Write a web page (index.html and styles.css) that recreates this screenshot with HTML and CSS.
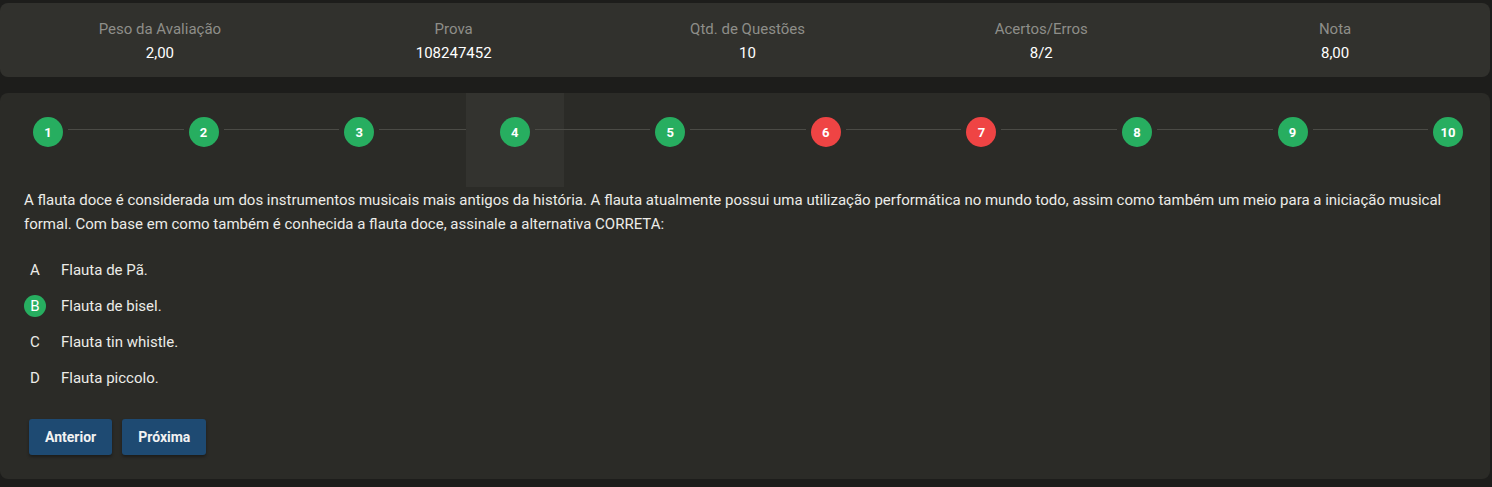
FILE: index.html
```
<!DOCTYPE html>
<html lang="pt-BR">
<head>
<meta charset="utf-8">
<title>Prova</title>
<link rel="stylesheet" href="styles.css">
</head>
<body>
<div class="page">
  <section class="card stats">
    <div class="stat"><div class="stat-label">Peso da Avaliação</div><div class="stat-value">2,00</div></div>
    <div class="stat"><div class="stat-label">Prova</div><div class="stat-value">108247452</div></div>
    <div class="stat"><div class="stat-label">Qtd. de Questões</div><div class="stat-value">10</div></div>
    <div class="stat"><div class="stat-label">Acertos/Erros</div><div class="stat-value">8/2</div></div>
    <div class="stat"><div class="stat-label">Nota</div><div class="stat-value">8,00</div></div>
  </section>

  <section class="card quiz">
    <div class="steps">
      <div class="step-wrap"><div class="step ok">1</div></div><div class="line"></div>
      <div class="step-wrap"><div class="step ok">2</div></div><div class="line"></div>
      <div class="step-wrap"><div class="step ok">3</div></div><div class="line"></div>
      <div class="step-wrap active"><div class="step ok">4</div></div><div class="line"></div>
      <div class="step-wrap"><div class="step ok">5</div></div><div class="line"></div>
      <div class="step-wrap"><div class="step bad">6</div></div><div class="line"></div>
      <div class="step-wrap"><div class="step bad">7</div></div><div class="line"></div>
      <div class="step-wrap"><div class="step ok">8</div></div><div class="line"></div>
      <div class="step-wrap"><div class="step ok">9</div></div><div class="line"></div>
      <div class="step-wrap"><div class="step ok">10</div></div>
    </div>

    <p class="question">A flauta doce é considerada um dos instrumentos musicais mais antigos da história. A flauta atualmente possui uma utilização performática no mundo todo, assim como também um meio para a iniciação musical formal. Com base em como também é conhecida a flauta doce, assinale a alternativa CORRETA:</p>

    <ul class="options">
      <li class="option"><span class="letter">A</span><span class="option-text">Flauta de Pã.</span></li>
      <li class="option correct"><span class="letter">B</span><span class="option-text">Flauta de bisel.</span></li>
      <li class="option"><span class="letter">C</span><span class="option-text">Flauta tin whistle.</span></li>
      <li class="option"><span class="letter">D</span><span class="option-text">Flauta piccolo.</span></li>
    </ul>

    <div class="actions">
      <button class="btn">Anterior</button>
      <button class="btn">Próxima</button>
    </div>
  </section>
</div>
</body>
</html>
```
FILE: styles.css
```
* { box-sizing: border-box; }
html, body {
  margin: 0;
  padding: 0;
  background: #1d1d1b;
  font-family: Roboto, "Liberation Sans", sans-serif;
  color: #ecece8;
}
.page {
  padding: 3px 2px 8px 0;
  display: flex;
  flex-direction: column;
  gap: 16px;
}
.card {
  border-radius: 8px;
}
.stats {
  background: #31312d;
  height: 74px;
  display: flex;
  align-items: center;
  padding: 2px 8px 0 13px;
}
.stat {
  flex: 1;
  text-align: center;
  font-size: 15px;
  line-height: 24px;
}
.stat-label { color: #8e8e89; }
.stat-value { color: #ffffff; }

.quiz {
  background: #2b2b27;
  padding-bottom: 24px;
}
.steps {
  display: flex;
  align-items: flex-start;
  padding: 0 27px 0 33px;
}
.step-wrap {
  flex: 0 0 auto;
  padding: 24px 0 40px;
}
.step-wrap.active {
  padding: 24px 34px 40px;
  margin: 0 -34px;
  background: #33332f;
}
.step {
  width: 30px;
  height: 30px;
  border-radius: 50%;
  color: #fff;
  font-weight: 700;
  font-size: 13px;
  display: flex;
  align-items: center;
  justify-content: center;
}
.step.ok { background: #27ae60; }
.step.bad { background: #ef4444; }
.line {
  flex: 1;
  height: 1px;
  margin: 36px 5px 0;
  background: #4b4b46;
}
.question {
  margin: 0;
  padding: 1px 24px 0;
  font-size: 15px;
  line-height: 24px;
  color: #ecece8;
}
.options {
  list-style: none;
  margin: 16px 0 0;
  padding: 0 24px;
}
.option {
  height: 36px;
  display: flex;
  align-items: center;
  gap: 15px;
  font-size: 15px;
}
.letter {
  width: 22px;
  height: 22px;
  border-radius: 50%;
  display: flex;
  align-items: center;
  justify-content: center;
}
.option.correct .letter { background: #27ae60; color: #fff; }
.actions {
  margin-top: 23px;
  padding-left: 29px;
  display: flex;
  gap: 10px;
}
.btn {
  height: 36px;
  padding: 0 16px;
  border: none;
  border-radius: 3px;
  background: #1e4a72;
  color: #f2f2f2;
  font-family: Roboto, "Liberation Sans", sans-serif;
  font-weight: 700;
  font-size: 14px;
  box-shadow: 0 2px 3px rgba(0,0,0,0.35);
}
```
